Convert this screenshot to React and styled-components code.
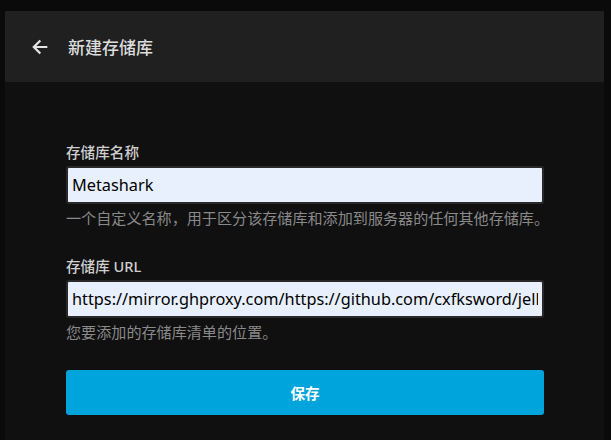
import styled, { createGlobalStyle } from "styled-components";

const GlobalStyle = createGlobalStyle`
    html, body {
        margin: 0;
        padding: 0;
        background: #0a0a0a;
        height: 100%;
    }
    #root {
        height: 100%;
    }
    * {
        box-sizing: border-box;
    }
`;

const FONT = `"Noto Sans", "Noto Sans CJK SC", sans-serif`;

const Page = styled.div`
    height: 440px;
    padding: 11px 7px 0 5px;
    display: flex;
    font-family: ${FONT};
`;
const Panel = styled.div`
    flex: 1;
    min-width: 0;
    display: flex;
    flex-direction: column;
    background: #101010;
`;
const Header = styled.header`
    height: 71px;
    display: flex;
    align-items: center;
    background: #202020;
    padding-left: 24px;
`;
const BackBtn = styled.button`
    display: flex;
    align-items: center;
    justify-content: center;
    width: 22px;
    height: 22px;
    padding: 0;
    border: 0;
    background: none;
    color: #e4e4e4;
    cursor: pointer;
    margin-right: 17px;
`;
const Title = styled.h1`
    margin: 0;
    font-size: 17px;
    font-weight: 500;
    color: #dddddd;
`;
const Body = styled.form`
    display: flex;
    flex-direction: column;
    min-width: 0;
    padding: 60px 60px 0 61px;
`;
const Field = styled.div`
    display: flex;
    flex-direction: column;
    min-width: 0;
    margin-bottom: 28px;
`;
const Label = styled.label`
    font-size: 14.6px;
    font-weight: 500;
    line-height: 20px;
    color: #cfcfcf;
    margin-bottom: 4px;
`;
const Input = styled.input`
    height: 38px;
    width: 100%;
    padding: 0 4px;
    border: 2px solid #292929;
    border-radius: 3px;
    background: #e8f0fe;
    color: #000;
    font-family: ${FONT};
    font-size: 16.3px;
    outline: none;
`;
const Help = styled.div`
    margin-top: 4px;
    font-size: 15.1px;
    line-height: 20px;
    color: #8a8a8a;
    white-space: nowrap;
`;
const SaveBtn = styled.button`
    height: 45px;
    border: 0;
    border-radius: 3px;
    background: #00a4dc;
    color: #fff;
    font-family: ${FONT};
    font-size: 14.6px;
    font-weight: 700;
    cursor: pointer;
`;

const ArrowBack = () => (
    <svg width="22" height="22" viewBox="0 0 24 24" fill="currentColor">
        <path d="M20 10.8H8.1l5.1-5.1L11.5 4 3.5 12l8 8 1.7-1.7-5.1-5.1H20v-2.4z"/>
    </svg>
);

export default function App(){
    return (
        <>
            <GlobalStyle/>
            <Page>
                <Panel>
                    <Header>
                        <BackBtn type="button"><ArrowBack/></BackBtn>
                        <Title>新建存储库</Title>
                    </Header>
                    <Body onSubmit={e => e.preventDefault()}>
                        <Field>
                            <Label>存储库名称</Label>
                            <Input defaultValue="Metashark"/>
                            <Help>一个自定义名称，用于区分该存储库和添加到服务器的任何其他存储库。</Help>
                        </Field>
                        <Field>
                            <Label>存储库 URL</Label>
                            <Input defaultValue="https://mirror.ghproxy.com/https://github.com/cxfksword/jellyfin-plugin-metashark/releases/download/manifest/manifest_cn.json"/>
                            <Help>您要添加的存储库清单的位置。</Help>
                        </Field>
                        <SaveBtn type="submit">保存</SaveBtn>
                    </Body>
                </Panel>
            </Page>
        </>
    );
}
